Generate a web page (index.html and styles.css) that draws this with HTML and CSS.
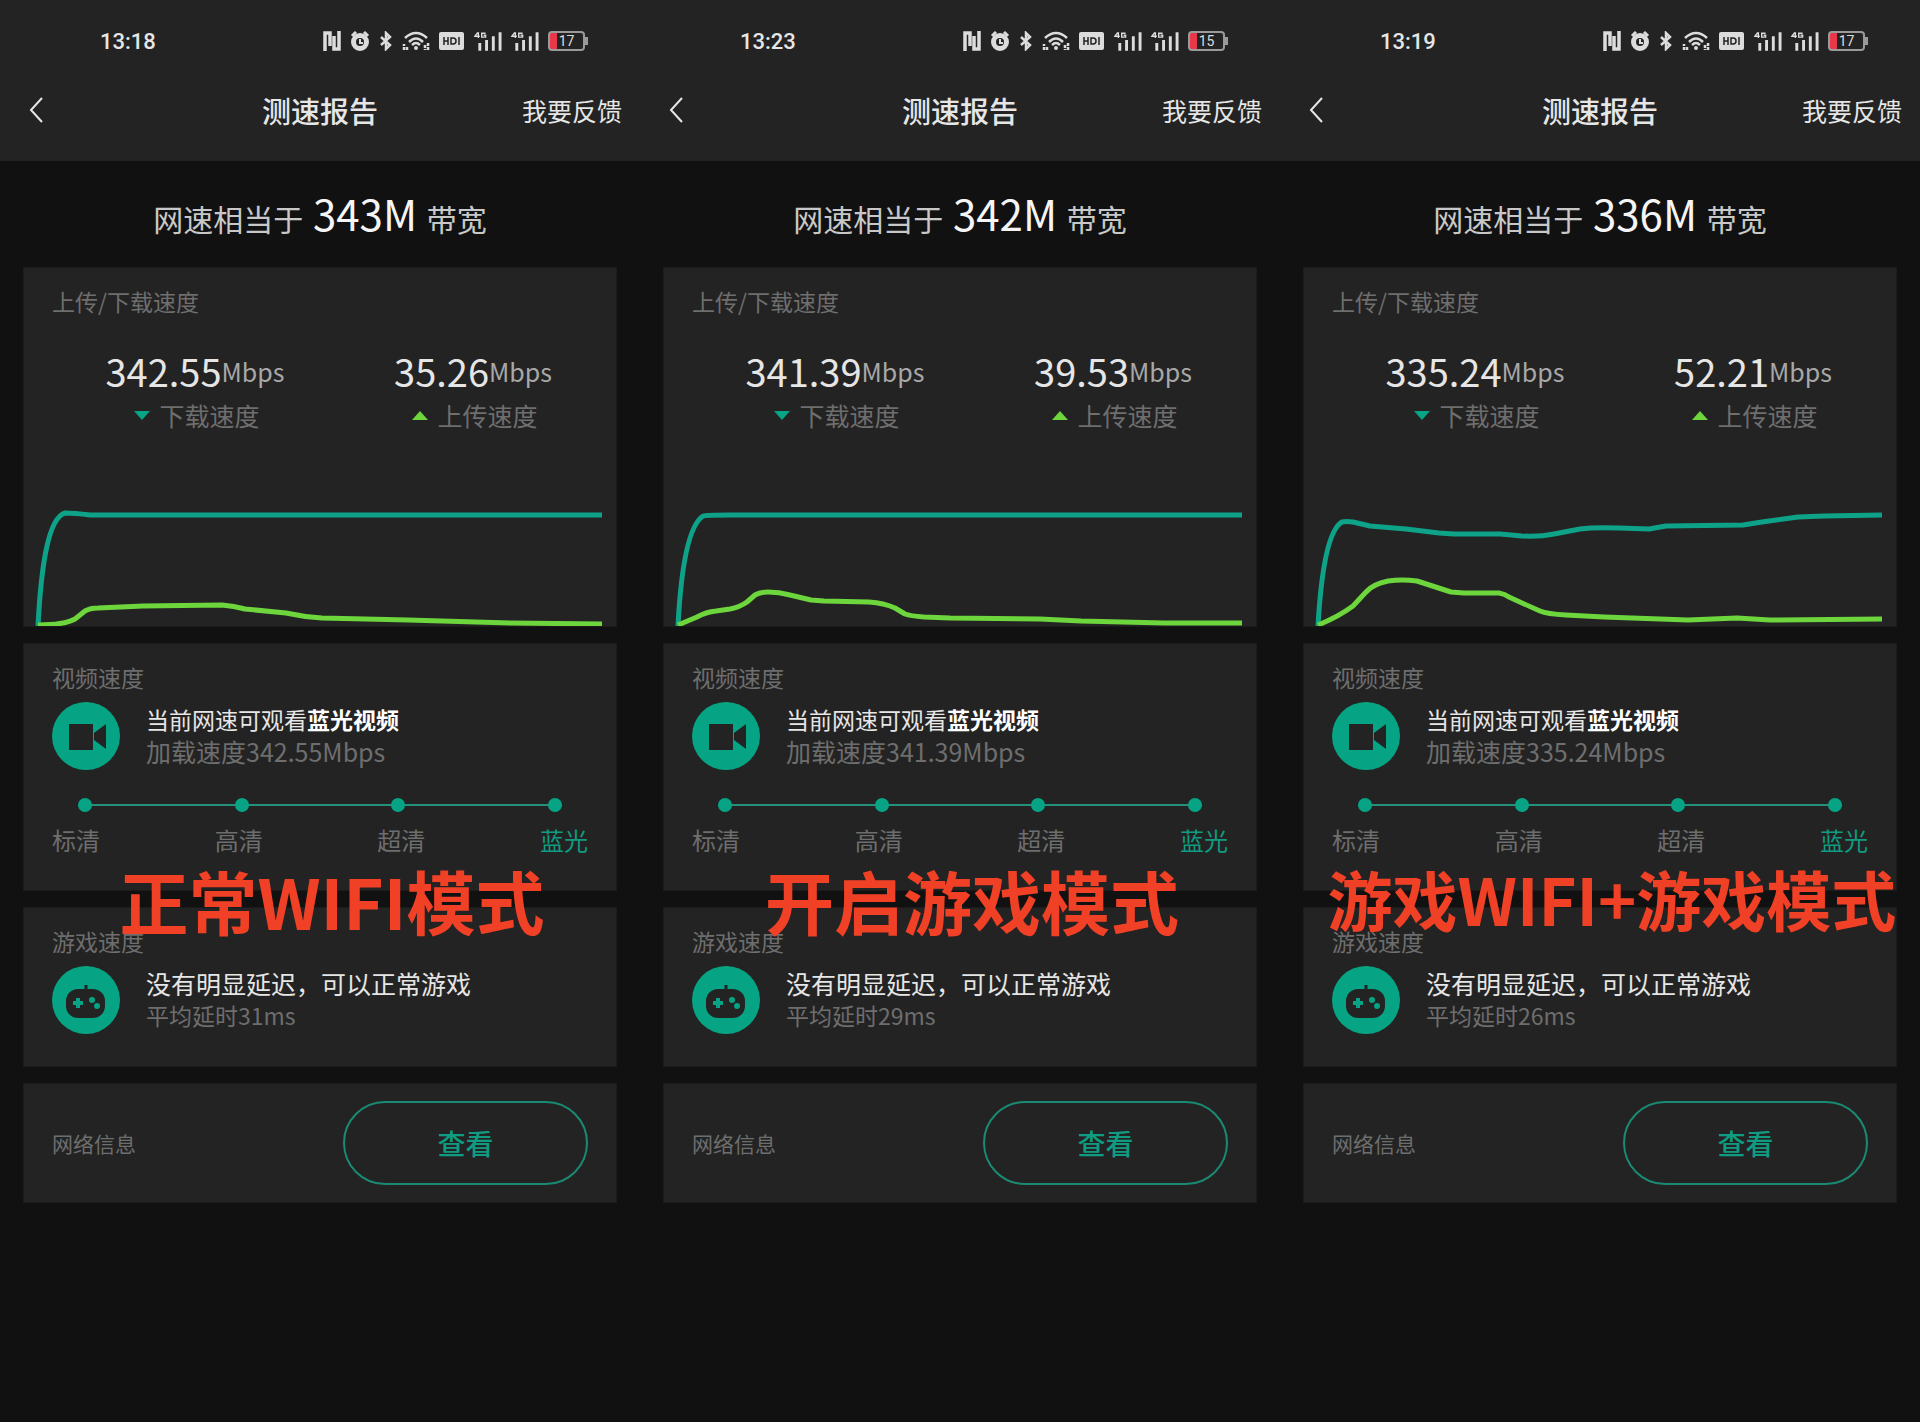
FILE: index.html
```
<!DOCTYPE html>
<html lang="zh-CN">
<head>
  <meta charset="UTF-8">
  <meta name="viewport" content="width=device-width, initial-scale=1">
  <title>测速报告</title>
  <link rel="stylesheet" href="styles.css">
</head>
<body>
  <!-- shared icons -->
  <svg class="sprite" aria-hidden="true">
    <symbol id="icon-nfc" viewBox="0 0 18 20">
      <path d="M2 20V2h5v13M11 5v13h5V0" fill="none" stroke="currentColor" stroke-width="3.500"/>
    </symbol>
    <symbol id="icon-alarm" viewBox="0 0 20 20">
      <path d="M2 5l4-4M18 5l-4-4" stroke="currentColor" stroke-width="3"/>
      <circle cx="10" cy="11" r="6.500" fill="none" stroke="currentColor" stroke-width="5"/>
      <path d="M10 8v4h3" fill="none" stroke="currentColor" stroke-width="2"/>
    </symbol>
    <symbol id="icon-bt" viewBox="0 0 14 20">
      <path d="M2 6l9 8-4 4V2l4 4-9 8" fill="none" stroke="currentColor" stroke-width="2.500"/>
    </symbol>
    <symbol id="icon-wifi" viewBox="0 0 28 20">
      <g fill="none" stroke="currentColor" stroke-width="2.500">
        <path d="M3 7Q14-3 25 7M7 11q7-7 14 0M10 14q4-4 8 0"/>
        <path d="M2 19v-6M5 19v-4M23 14v5M26 12v7" stroke-dasharray="3 1"/>
      </g>
      <circle cx="14" cy="17" r="2" fill="currentColor"/>
    </symbol>
    <symbol id="icon-hd" viewBox="0 0 26 20">
      <rect y="1" width="25" height="18" rx="2" fill="currentColor"/>
      <path d="M5 6v8M9 6v8M5 10h4M12 7h2q3 0 3 3t-3 3h-2zM20 6v8" fill="none" stroke="#232323" stroke-width="1.500"/>
    </symbol>
    <symbol id="icon-signal" viewBox="0 0 29 20">
      <path d="M4 1L1 5h5M4.500 1v6M12 2H8v4h4V4h-2" fill="none" stroke="currentColor" stroke-width="1.500"/>
      <path d="M6 12v8M13 9v11M20 5v15M27 1v19" stroke="currentColor" stroke-width="3"/>
    </symbol>
    <symbol id="icon-back" viewBox="0 0 16 26">
      <path d="M14 1L3 13l11 12" fill="none" stroke="currentColor" stroke-width="2"/>
    </symbol>
    <symbol id="icon-video" viewBox="0 0 68 68">
      <circle cx="34" cy="34" r="34" fill="#06a485"/>
      <path d="M17 22h24v26H17zM42 31l12-9v25l-12-9z" fill="#232323"/>
    </symbol>
    <symbol id="icon-game" viewBox="0 0 68 68">
      <circle cx="34" cy="34" r="34" fill="#06a485"/>
      <path d="M34 19v6" stroke="#232323" stroke-width="3"/>
      <rect x="14" y="23" width="39" height="29" rx="12" fill="#232323"/>
      <path d="M26 32v10M21 37h10" stroke="#06a485" stroke-width="4"/>
      <circle cx="40" cy="34" r="3" fill="#06a485"/>
      <circle cx="45" cy="40" r="3" fill="#06a485"/>
    </symbol>
  </svg>

  <main class="compare">
    <section class="phone">
      <header class="top">
        <div class="status">
          <span class="time">13:18</span>
          <div class="status-icons">
            <svg width="18" height="20"><use href="#icon-nfc"/></svg>
            <svg width="20" height="20"><use href="#icon-alarm"/></svg>
            <svg width="14" height="20"><use href="#icon-bt"/></svg>
            <svg width="28" height="20"><use href="#icon-wifi"/></svg>
            <svg width="26" height="20"><use href="#icon-hd"/></svg>
            <svg width="28" height="20"><use href="#icon-signal"/></svg>
            <svg width="28" height="20"><use href="#icon-signal"/></svg>
            <span class="battery">17</span>
          </div>
        </div>
        <nav class="nav">
          <button class="back" aria-label="返回"><svg width="16" height="26"><use href="#icon-back"/></svg></button>
          <h1>测速报告</h1>
          <a class="feedback" href="#">我要反馈</a>
        </nav>
      </header>
      <p class="headline">网速相当于 <strong>343M</strong> 带宽</p>
      <div class="cards">
        <article class="card">
          <h2>上传/下载速度</h2>
          <div class="speeds">
            <div>
              <p class="speed">342.55<small>Mbps</small></p>
              <p class="dir down">下载速度</p>
            </div>
            <div>
              <p class="speed">35.26<small>Mbps</small></p>
              <p class="dir up">上传速度</p>
            </div>
          </div>
          <svg class="chart" viewBox="0 0 592 120" preserveAspectRatio="none">
            <path class="line-down" d="M14 120C17 62 24 12 41 7Q50 7 66 9L578 9"/>
            <path class="line-up" d="M14 119Q40 119 51 113L61 105Q66 102 74 102L119 100L198 99Q210 100 221 103L262 107Q280 111 298 112L384 114L486 117L578 118"/>
          </svg>
        </article>
        <article class="card">
          <h2>视频速度</h2>
          <div class="info">
            <svg width="68" height="68"><use href="#icon-video"/></svg>
            <div>
              <p class="result">当前网速可观看<b>蓝光视频</b></p>
              <p class="detail">加载速度342.55Mbps</p>
            </div>
          </div>
          <div class="steps"><i></i><i></i><i></i><i></i></div>
          <div class="step-names"><span>标清</span><span>高清</span><span>超清</span><span class="active">蓝光</span></div>
        </article>
        <article class="card game">
          <h2>游戏速度</h2>
          <div class="info">
            <svg width="68" height="68"><use href="#icon-game"/></svg>
            <div>
              <p class="result">没有明显延迟，可以正常游戏</p>
              <p class="detail">平均延时31ms</p>
            </div>
          </div>
          <p class="caption">正常WIFI模式</p>
        </article>
        <article class="card network">
          <h2>网络信息</h2>
          <button class="view">查看</button>
        </article>
      </div>
    </section>

    <section class="phone">
      <header class="top">
        <div class="status">
          <span class="time">13:23</span>
          <div class="status-icons">
            <svg width="18" height="20"><use href="#icon-nfc"/></svg>
            <svg width="20" height="20"><use href="#icon-alarm"/></svg>
            <svg width="14" height="20"><use href="#icon-bt"/></svg>
            <svg width="28" height="20"><use href="#icon-wifi"/></svg>
            <svg width="26" height="20"><use href="#icon-hd"/></svg>
            <svg width="28" height="20"><use href="#icon-signal"/></svg>
            <svg width="28" height="20"><use href="#icon-signal"/></svg>
            <span class="battery">15</span>
          </div>
        </div>
        <nav class="nav">
          <button class="back" aria-label="返回"><svg width="16" height="26"><use href="#icon-back"/></svg></button>
          <h1>测速报告</h1>
          <a class="feedback" href="#">我要反馈</a>
        </nav>
      </header>
      <p class="headline">网速相当于 <strong>342M</strong> 带宽</p>
      <div class="cards">
        <article class="card">
          <h2>上传/下载速度</h2>
          <div class="speeds">
            <div>
              <p class="speed">341.39<small>Mbps</small></p>
              <p class="dir down">下载速度</p>
            </div>
            <div>
              <p class="speed">39.53<small>Mbps</small></p>
              <p class="dir up">上传速度</p>
            </div>
          </div>
          <svg class="chart" viewBox="0 0 592 120" preserveAspectRatio="none">
            <path class="line-down" d="M14 120C17 62 24 20 39 10Q42 9 66 9L578 9"/>
            <path class="line-up" d="M14 119L33 111Q42 106 52 105L66 103Q76 101 83 96L91 89Q96 86 104 86Q115 86 126 89L147 94L160 95L205 96Q220 97 231 102L241 108Q246 110 260 111L286 112L376 113L417 115L500 117L578 117"/>
          </svg>
        </article>
        <article class="card">
          <h2>视频速度</h2>
          <div class="info">
            <svg width="68" height="68"><use href="#icon-video"/></svg>
            <div>
              <p class="result">当前网速可观看<b>蓝光视频</b></p>
              <p class="detail">加载速度341.39Mbps</p>
            </div>
          </div>
          <div class="steps"><i></i><i></i><i></i><i></i></div>
          <div class="step-names"><span>标清</span><span>高清</span><span>超清</span><span class="active">蓝光</span></div>
        </article>
        <article class="card game">
          <h2>游戏速度</h2>
          <div class="info">
            <svg width="68" height="68"><use href="#icon-game"/></svg>
            <div>
              <p class="result">没有明显延迟，可以正常游戏</p>
              <p class="detail">平均延时29ms</p>
            </div>
          </div>
          <p class="caption">开启游戏模式</p>
        </article>
        <article class="card network">
          <h2>网络信息</h2>
          <button class="view">查看</button>
        </article>
      </div>
    </section>

    <section class="phone">
      <header class="top">
        <div class="status">
          <span class="time">13:19</span>
          <div class="status-icons">
            <svg width="18" height="20"><use href="#icon-nfc"/></svg>
            <svg width="20" height="20"><use href="#icon-alarm"/></svg>
            <svg width="14" height="20"><use href="#icon-bt"/></svg>
            <svg width="28" height="20"><use href="#icon-wifi"/></svg>
            <svg width="26" height="20"><use href="#icon-hd"/></svg>
            <svg width="28" height="20"><use href="#icon-signal"/></svg>
            <svg width="28" height="20"><use href="#icon-signal"/></svg>
            <span class="battery">17</span>
          </div>
        </div>
        <nav class="nav">
          <button class="back" aria-label="返回"><svg width="16" height="26"><use href="#icon-back"/></svg></button>
          <h1>测速报告</h1>
          <a class="feedback" href="#">我要反馈</a>
        </nav>
      </header>
      <p class="headline">网速相当于 <strong>336M</strong> 带宽</p>
      <div class="cards">
        <article class="card">
          <h2>上传/下载速度</h2>
          <div class="speeds">
            <div>
              <p class="speed">335.24<small>Mbps</small></p>
              <p class="dir down">下载速度</p>
            </div>
            <div>
              <p class="speed">52.21<small>Mbps</small></p>
              <p class="dir up">上传速度</p>
            </div>
          </div>
          <svg class="chart" viewBox="0 0 592 120" preserveAspectRatio="none">
            <path class="line-down" d="M14 120C17 68 24 24 38 16Q42 15 49 16L66 20L102 23L135 27L150 28L196 28L218 30Q235 31 250 28L276 23Q290 21 315 22L345 23L362 20L439 19L458 16L494 11L520 10L578 9"/>
            <path class="line-up" d="M14 119Q34 111 49 100L62 86Q69 78 84 75Q98 73 113 75L147 86L160 87L195 87Q201 88 205 91L218 97L236 105Q243 108 262 109L300 111L384 114L433 112L466 114L578 113"/>
          </svg>
        </article>
        <article class="card">
          <h2>视频速度</h2>
          <div class="info">
            <svg width="68" height="68"><use href="#icon-video"/></svg>
            <div>
              <p class="result">当前网速可观看<b>蓝光视频</b></p>
              <p class="detail">加载速度335.24Mbps</p>
            </div>
          </div>
          <div class="steps"><i></i><i></i><i></i><i></i></div>
          <div class="step-names"><span>标清</span><span>高清</span><span>超清</span><span class="active">蓝光</span></div>
        </article>
        <article class="card game">
          <h2>游戏速度</h2>
          <div class="info">
            <svg width="68" height="68"><use href="#icon-game"/></svg>
            <div>
              <p class="result">没有明显延迟，可以正常游戏</p>
              <p class="detail">平均延时26ms</p>
            </div>
          </div>
          <p class="caption long">游戏WIFI+游戏模式</p>
        </article>
        <article class="card network">
          <h2>网络信息</h2>
          <button class="view">查看</button>
        </article>
      </div>
    </section>
  </main>
</body>
</html>
```
FILE: styles.css
```
* {
  box-sizing: border-box;
}
body {
  margin: 0;
  background: #111;
  color: #e6e6e6;
  font-family: "Noto Sans CJK SC", sans-serif;
}
h1, h2, p {
  margin: 0;
  font-weight: normal;
}
button {
  font-family: inherit;
  background: none;
  border: none;
  padding: 0;
  cursor: pointer;
}
svg {
  display: block;
}
.sprite {
  position: absolute;
  width: 0;
  height: 0;
}
.compare {
  display: grid;
  grid-template-columns: repeat(3, 1fr);
  min-height: 100vh;
}

/* header */
.top {
  background: #232323;
  padding: 23px 18px 31px;
}
.status {
  display: flex;
  justify-content: space-between;
  align-items: center;
  height: 36px;
  padding: 0 34px 0 82px;
}
.time {
  font-family: Roboto, sans-serif;
  font-size: 22px;
  font-weight: 500;
}
.status-icons {
  display: flex;
  align-items: center;
  gap: 9px;
  color: #dcdcdc;
}
.battery {
  position: relative;
  width: 37px;
  height: 20px;
  margin-right: 3px;
  border: 2px solid #9a9a9a;
  border-radius: 4px;
  background: linear-gradient(to right, #e8384a 7px, transparent 7px);
  font: 14px/16px Roboto, sans-serif;
  text-align: center;
}
.battery::after {
  content: "";
  position: absolute;
  right: -5px;
  top: 4px;
  width: 3px;
  height: 8px;
  background: #9a9a9a;
}
.nav {
  display: grid;
  grid-template-columns: 1fr auto 1fr;
  align-items: center;
  height: 40px;
  margin-top: 31px;
}
.back {
  justify-self: start;
  padding-left: 10px;
  color: #e6e6e6;
}
.nav h1 {
  font-size: 29px;
  font-weight: 500;
  line-height: 40px;
}
.feedback {
  justify-self: end;
  color: #e6e6e6;
  font-size: 25px;
  line-height: 40px;
  text-decoration: none;
}

.headline {
  padding: 27px 0 20px;
  font-size: 30px;
  line-height: 60px;
  text-align: center;
  color: #c8c8c8;
}
.headline strong {
  margin: 0 3px;
  font-size: 42px;
  font-weight: normal;
  line-height: 1;
  color: #f5f5f5;
}

/* cards */
.cards {
  display: flex;
  flex-direction: column;
  gap: 18px;
  padding: 0 24px;
}
.card {
  position: relative;
  padding: 16px 28px 32px;
  background: #232323;
  box-shadow: 0 0 0 1px #1b1b1b;
}
.card h2 {
  color: #6e6e6e;
  font-size: 23px;
  line-height: 34px;
}
.speeds {
  display: grid;
  grid-template-columns: 1fr 1fr;
  margin: 29px -24px 0 4px;
}
.speed {
  display: flex;
  justify-content: center;
  align-items: center;
  font-size: 38px;
  line-height: 48px;
}
.speed small {
  color: #a8a8a8;
  font-size: 25px;
}
.dir {
  display: flex;
  justify-content: center;
  align-items: center;
  gap: 9px;
  margin-top: 3px;
  padding-left: 4px;
  color: #6e6e6e;
  font-size: 25px;
  line-height: 34px;
}
.dir::before {
  content: "";
  border: 8px solid transparent;
  border-width: 0 8px;
}
.down::before {
  border-top: 9px solid #06a485;
}
.up::before {
  border-bottom: 9px solid #6cd63c;
}
.chart {
  width: calc(100% + 56px);
  height: 120px;
  margin: 74px -28px -32px;
}
.chart path {
  fill: none;
  stroke-width: 5;
  stroke-linejoin: round;
}
.line-down {
  stroke: #0ea388;
}
.line-up {
  stroke: #6cd63c;
}

.info {
  display: flex;
  align-items: center;
  gap: 26px;
  margin-top: 8px;
}
.info div {
  padding-bottom: 2px;
}
.info p {
  line-height: 32px;
}
.result {
  font-size: 23px;
}
.result b {
  color: #fff;
}
.detail {
  color: #6e6e6e;
  font-size: 25px;
}
.game .result {
  font-size: 25px;
}
.game .detail {
  font-size: 23px;
}

.steps {
  display: flex;
  justify-content: space-between;
  margin: 28px 26px 0;
  background: linear-gradient(#24917a, #24917a) center / 100% 2px no-repeat;
}
.steps i {
  width: 14px;
  height: 14px;
  border-radius: 50%;
  background: #06a485;
}
.step-names {
  display: flex;
  justify-content: space-between;
  margin: 11px 0 1px;
  color: #6e6e6e;
  font-size: 24px;
  line-height: 34px;
}
.step-names .active {
  color: #0f9c80;
}

/* mode name laid over the cards */
.caption {
  position: absolute;
  top: -44px;
  left: 0;
  right: -24px;
  color: #f04126;
  font-size: 69px;
  font-weight: bold;
  line-height: 72px;
  text-align: center;
  white-space: nowrap;
}
.caption.long {
  font-size: 65px;
  line-height: 68px;
}

.network {
  display: flex;
  justify-content: space-between;
  align-items: center;
  padding: 17px 28px;
}
.network h2 {
  font-size: 21px;
}
.view {
  width: 245px;
  height: 84px;
  border: 2px solid #1b8a73;
  border-radius: 42px;
  color: #0f9c80;
  font-size: 28px;
  font-weight: 500;
}
```
